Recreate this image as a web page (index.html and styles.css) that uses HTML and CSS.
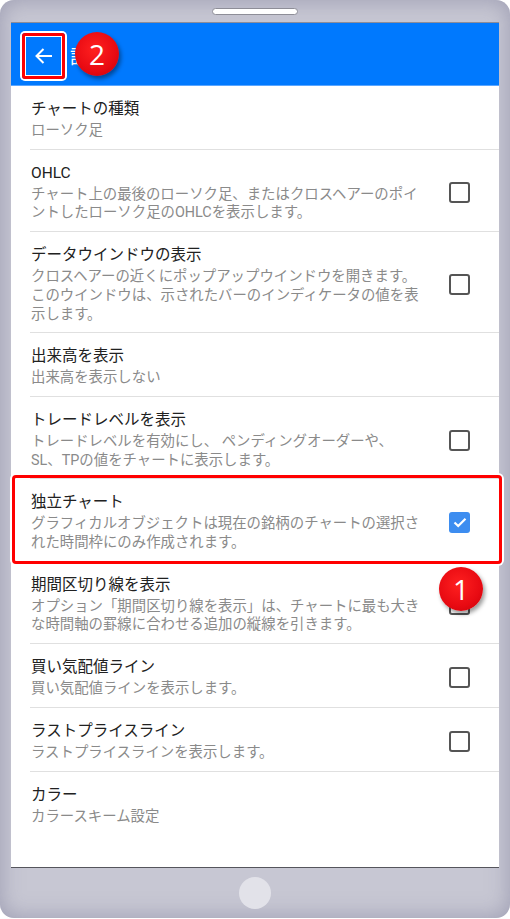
FILE: index.html
```html
<!DOCTYPE html>
<html lang="ja">
<head>
    <meta charset="UTF-8">
    <meta name="viewport" content="width=device-width, initial-scale=1.0">
    <title>設定</title>
    <link rel="stylesheet" href="styles.css">
</head>
<body>
    <div class="phone">
        <div class="phone-top">
            <div class="speaker"></div>
        </div>

        <div class="screen">
            <header class="toolbar">
                <div class="back-btn">
                    <svg width="20" height="20" viewBox="0 0 20 20">
                        <path d="M18 10H2.5M9.5 3L2.5 10L9.5 17" fill="none" stroke="#fff" stroke-width="2"/>
                    </svg>
                </div>
                <span class="toolbar-title">設定</span>
                <span class="badge badge-2">2</span>
            </header>

            <ul class="settings">
                <li class="item">
                    <div class="item-text">
                        <div class="item-title">チャートの種類</div>
                        <div class="item-sub">ローソク足</div>
                    </div>
                </li>
                <li class="item">
                    <div class="item-text">
                        <div class="item-title">OHLC</div>
                        <div class="item-sub">チャート上の最後のローソク足、またはクロスヘアーのポイ<br>ントしたローソク足のOHLCを表示します。</div>
                    </div>
                    <span class="check"></span>
                </li>
                <li class="item">
                    <div class="item-text">
                        <div class="item-title">データウインドウの表示</div>
                        <div class="item-sub">クロスヘアーの近くにポップアップウインドウを開きます。<br>このウインドウは、示されたバーのインディケータの値を表<br>示します。</div>
                    </div>
                    <span class="check"></span>
                </li>
                <li class="item">
                    <div class="item-text">
                        <div class="item-title">出来高を表示</div>
                        <div class="item-sub">出来高を表示しない</div>
                    </div>
                </li>
                <li class="item">
                    <div class="item-text">
                        <div class="item-title">トレードレベルを表示</div>
                        <div class="item-sub">トレードレベルを有効にし、 ペンディングオーダーや、<br>SL、TPの値をチャートに表示します。</div>
                    </div>
                    <span class="check"></span>
                </li>
                <li class="item highlighted">
                    <div class="item-text">
                        <div class="item-title">独立チャート</div>
                        <div class="item-sub">グラフィカルオブジェクトは現在の銘柄のチャートの選択さ<br>れた時間枠にのみ作成されます。</div>
                    </div>
                    <span class="check checked">
                        <svg width="14" height="11" viewBox="0 0 14 11">
                            <path d="M1.5 5.5L5.2 9L12.5 1.8" fill="none" stroke="#fff" stroke-width="2.2"/>
                        </svg>
                    </span>
                </li>
                <li class="item">
                    <div class="item-text">
                        <div class="item-title">期間区切り線を表示</div>
                        <div class="item-sub">オプション「期間区切り線を表示」は、チャートに最も大き<br>な時間軸の罫線に合わせる追加の縦線を引きます。</div>
                    </div>
                    <span class="check"></span>
                    <span class="badge badge-1">1</span>
                </li>
                <li class="item">
                    <div class="item-text">
                        <div class="item-title">買い気配値ライン</div>
                        <div class="item-sub">買い気配値ラインを表示します。</div>
                    </div>
                    <span class="check"></span>
                </li>
                <li class="item">
                    <div class="item-text">
                        <div class="item-title">ラストプライスライン</div>
                        <div class="item-sub">ラストプライスラインを表示します。</div>
                    </div>
                    <span class="check"></span>
                </li>
                <li class="item">
                    <div class="item-text">
                        <div class="item-title">カラー</div>
                        <div class="item-sub">カラースキーム設定</div>
                    </div>
                </li>
            </ul>
        </div>

        <div class="phone-bottom">
            <div class="home-btn"></div>
        </div>
    </div>
</body>
</html>
```

FILE: styles.css
```css
body {
    margin: 0;
    background: #fff;
    font-family: Roboto, "Noto Sans CJK JP", sans-serif;
}

.phone {
    width: 510px;
    height: 918px;
    border-radius: 14px;
    background: #c7c7d3;
    box-shadow: inset 0 0 22px rgba(120, 120, 150, 0.55);
    display: flex;
    flex-direction: column;
    padding: 0 11px;
    box-sizing: border-box;
}

.phone-top {
    height: 22px;
    display: flex;
    justify-content: center;
    padding-top: 8px;
    box-sizing: border-box;
}

.speaker {
    width: 86px;
    height: 7px;
    border-radius: 4px;
    background: #fff;
    border: 1px solid #8e8e98;
    box-sizing: border-box;
}

.screen {
    flex: 1;
    background: #fff;
    border-top: 1px solid #8c8c98;
    border-bottom: 1px solid #55555c;
    display: flex;
    flex-direction: column;
}

/* Toolbar */
.toolbar {
    position: relative;
    height: 63px;
    background: #0079fe;
    border-bottom: 1px solid #5aa6ff;
    display: flex;
    align-items: center;
    padding: 3px 0 0 11px;
    box-sizing: border-box;
}

.back-btn {
    width: 37px;
    height: 40px;
    border: 3px solid #f00;
    border-radius: 3px;
    box-shadow: 0 0 0 2px #fff, inset 0 0 0 1px #fff;
    display: flex;
    align-items: center;
    justify-content: center;
}

.toolbar-title {
    margin-left: 5px;
    color: #fff;
    font-size: 19px;
}

/* Badges */
.badge {
    position: absolute;
    width: 44px;
    height: 44px;
    border-radius: 50%;
    background: radial-gradient(circle at 45% 40%, #ff2020 0%, #e80a12 60%, #c40008 100%);
    box-shadow: 2px 3px 4px rgba(0, 0, 0, 0.4);
    color: #fff;
    font-family: "Open Sans", Roboto, sans-serif;
    font-size: 28px;
    line-height: 44px;
    text-align: center;
}

.badge-2 {
    left: 64px;
    top: 9px;
}

.badge-1 {
    right: 16px;
    top: 5px;
}

/* Settings list */
.settings {
    list-style: none;
    margin: 0;
    padding: 0;
}

.item {
    position: relative;
    display: flex;
    align-items: center;
    margin-left: 19px;
    padding: 13px 29px 8px 1px;
    border-bottom: 1px solid #e0e0e0;
}

.item:last-child {
    border-bottom: none;
}

.item-text {
    flex: 1;
}

.item-title {
    font-size: 15.5px;
    line-height: 21px;
    color: #212121;
}

.item-sub {
    margin-top: 2px;
    font-size: 14.4px;
    line-height: 18.7px;
    color: #8a8a8a;
    white-space: nowrap;
}

.check {
    width: 21px;
    height: 21px;
    border: 2px solid #555;
    border-radius: 3px;
    box-sizing: border-box;
    display: flex;
    align-items: center;
    justify-content: center;
}

.check.checked {
    border: none;
    background: #3d8df0;
}

.highlighted::after {
    content: "";
    position: absolute;
    top: -4px;
    bottom: -3px;
    left: -18px;
    right: -3px;
    border: 3px solid #f00;
    border-radius: 4px;
    box-shadow: 0 0 0 2px #fff;
}

/* Home button */
.phone-bottom {
    height: 50px;
    display: flex;
    justify-content: center;
    padding-top: 9px;
    box-sizing: border-box;
}

.home-btn {
    width: 32px;
    height: 32px;
    border-radius: 50%;
    background: #e2e2e9;
}
```
